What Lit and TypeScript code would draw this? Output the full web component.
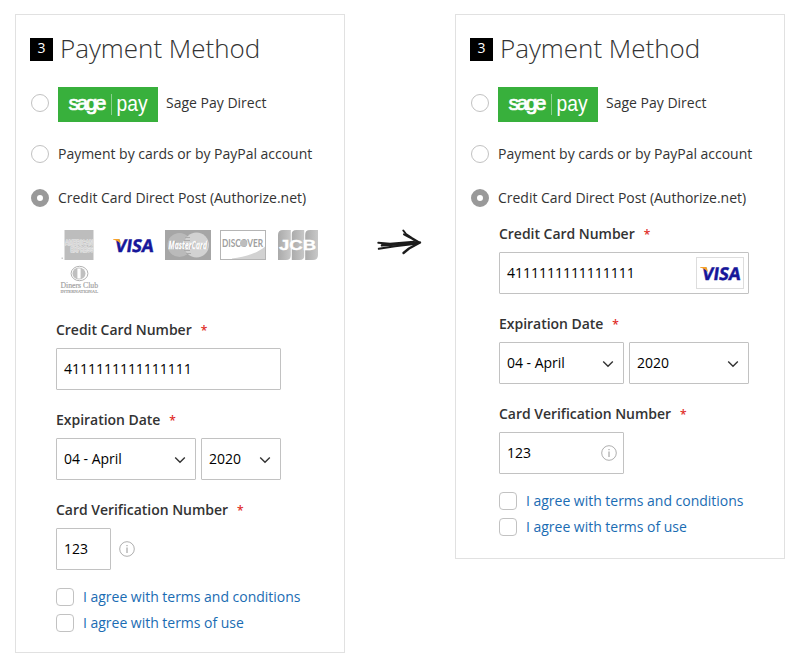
import { LitElement, html, svg, css, nothing } from "lit";
import { customElement, property } from "lit/decorators.js";

const visaMark = svg`
  <text transform="translate(4.400 21.500) skewX(-8)" fill="#16169a" class="visa" textLength="38.500" lengthAdjust="spacingAndGlyphs">VISA</text>
  <path d="M3 9h5.500q1.200 0 1.500 1.200l1 4C9 12 6.500 10.500 3 9.600z" fill="#f7a128"/>`;

@customElement("card-logo")
export class CardLogo extends LitElement {
  @property() kind = "visa";
  static styles = css`
    :host { display: block; width: 46px; height: 30px; }
    svg { display: block; width: 46px; height: 30px; overflow: visible; }
    .visa { font: 700 17.5px "Open Sans", sans-serif; letter-spacing: 0; stroke: #16169a; stroke-width: 0.5px; }
    .amex { font: 700 6.6px "Liberation Sans", sans-serif; }
    .master { font: italic 700 10.5px "Open Sans", sans-serif; }
    .discover { font: 700 10.5px "Lato", sans-serif; }
    .jcb { font: 700 14px "Liberation Sans", sans-serif; }
    .diners { font: 9px "Liberation Serif", serif; }
    .inter { font: 5px "Liberation Serif", serif; }
  `;
  private art() {
    switch (this.kind) {
      case "amex":
        return svg`
          <rect x="9.500" width="29" height="30" fill="#bdbdbd"/>
          <rect x="6.500" y="27.500" width="1.500" height="1.500" fill="#ccc"/>
          <g fill="#cfcfcf" stroke="#efefef" stroke-width=".9" paint-order="stroke"><text class="amex" x="10" y="14.500" textLength="28" lengthAdjust="spacingAndGlyphs">AMERICAN</text>
          <text class="amex" x="15.500" y="21.500" textLength="23" lengthAdjust="spacingAndGlyphs">EXPRESS</text></g>`;
      case "mastercard":
        return svg`
          <rect width="46" height="30" fill="#a6a6a6"/>
          <circle cx="14.500" cy="15" r="12" fill="#bababa"/>
          <circle cx="31.500" cy="15" r="12.500" fill="#d2d2d2"/>
          <path d="M20 7.500h5M19 10.500h6M19 20.500h6M21 23.500h5" stroke="#acacac"/>
          <text class="master" x="4.200" y="19.400" fill="#8b8b8b" textLength="38.500" lengthAdjust="spacingAndGlyphs">MasterCard</text>
          <text class="master" x="3.600" y="18.700" fill="#fff" stroke="#fff" stroke-width=".3" textLength="38.500" lengthAdjust="spacingAndGlyphs">MasterCard</text>`;
      case "discover":
        return svg`
          <rect x=".5" y=".5" width="45" height="29" fill="#fff" stroke="#b5b5b5"/>
          <path d="M45 16.500C38 23 25 27 12 28.500v.5h33z" fill="#d2d2d2"/>
          <text class="discover" x="2" y="16.800" fill="#a0a0a0" textLength="41" lengthAdjust="spacingAndGlyphs">DISCOVER</text>
          <circle cx="23.500" cy="13.200" r="3.500" fill="#bdbdbd"/>`;
      case "jcb":
        return svg`
          <defs><linearGradient id="g"><stop stop-color="#aaa"/><stop offset="1" stop-color="#c8c8c8"/></linearGradient></defs>
          ${[3, 16.5, 30].map((x) => svg`<path transform="translate(${x} 0)" d="M5 0h8v25q0 5-5 5H0V5q0-5 5-5z" fill="url(#g)"/>`)}
          <path d="M16.250 0v30M29.750 0v30" stroke="#fff" stroke-width=".8"/>
          <text class="jcb" x="4" y="19.700" fill="#fff" stroke="#fff" stroke-width=".3" textLength="37" lengthAdjust="spacingAndGlyphs">JCB</text>`;
      case "diners":
        return svg`
          <ellipse cx="24.500" cy="8.500" rx="8.400" ry="7.200" fill="#fff" stroke="#b2b2b2"/>
          <ellipse cx="24" cy="8.500" rx="6.500" ry="5.900" fill="#c0c0c0"/>
          <path d="M24 3.500v10" stroke="#fff" stroke-width="3.200"/>
          <g fill="#a2a2a2" stroke="#a2a2a2" stroke-width=".2"><text class="diners" x="5.500" y="23.200" textLength="37.500" lengthAdjust="spacingAndGlyphs">Diners Club</text>
          <text class="inter" x="5.500" y="28" textLength="37.500" lengthAdjust="spacingAndGlyphs">INTERNATIONAL</text></g>`;
      default:
        return visaMark;
    }
  }
  render() {
    return html`<svg viewBox="0 0 46 30">${this.art()}</svg>`;
  }
}

@customElement("payment-panel")
export class PaymentPanel extends LitElement {
  @property({ type: Boolean, reflect: true }) compact = false;

  static styles = css`
    :host { display: block; box-sizing: border-box; width: 330px; border: 1px solid #e1e1e1; padding: 0 14px 16px; background: #fff; letter-spacing: -0.02px; }
    :host([compact]) { padding-bottom: 18px; }
    .head { display: flex; align-items: center; height: 68px; }
    .num { width: 23px; height: 23px; background: #000; color: #fff; font: 14px/20px "Open Sans", sans-serif; text-align: center; }
    h2 { margin: 0 0 2px 7px; font-size: 26px; font-weight: 300; line-height: 36px; color: #333; white-space: nowrap; }
    .method { display: flex; align-items: center; height: 44px; white-space: nowrap; }
    .method.first { box-sizing: border-box; height: 49px; padding: 4px 0 10px; align-items: flex-start; }
    .method.first .radio, .method.first .name { margin-top: 7px; }
    .method.last { height: 36px; padding-top: 4px; }
    .radio { box-sizing: border-box; width: 18px; height: 18px; border: 1px solid #c2c2c2; border-radius: 50%; margin: 0 9px 0 1px; flex: none; }
    .radio.on { border: 6px solid #999; }
    .name { line-height: 18px; letter-spacing: 0; }
    .sage { display: block; width: 100px; height: 35px; margin-right: 8px; }
    .sagetext { font: 21px "Liberation Sans", sans-serif; letter-spacing: -2.5px; stroke: #fff; stroke-width: 0.7px; }
    .paytext { font: 22px "Liberation Sans", sans-serif; }
    .logos { display: flex; flex-wrap: wrap; gap: 5px 9px; width: 270px; margin: 14px 0 17px 25px; }
    .form { width: 225px; margin-left: 26px; }
    :host([compact]) .form { width: 250px; margin-left: 29px; }
    .field { height: 90px; }
    .label { height: 36px; line-height: 36px; font-weight: 600; letter-spacing: -0.03px; }
    .label i { color: #e02b27; font: 600 12px "Open Sans", sans-serif; margin-left: 9px; }
    .row { display: flex; gap: 5px; }
    .box { box-sizing: border-box; height: 42px; border: 1px solid #c2c2c2; border-radius: 1px; padding: 0 7px; display: flex; align-items: center; justify-content: space-between; color: #000; flex: 1; }
    .box svg { width: 12px; height: 8px; margin: 1px 2px 0 0; }
    .month { flex: 0 0 140px; }
    :host([compact]) .month { flex-basis: 125px; }
    .cvv { flex: 0 0 55px; }
    :host([compact]) .cvv { flex-basis: 125px; }
    .row .info { width: 16px; height: 16px; align-self: center; margin: 0 0 1px 2.5px; }
    .cvv .info { margin: 0 -1px 1px 0; }
    .chip { box-sizing: border-box; width: 48px; height: 32px; border: 1px solid #ddd; margin-right: -3px; }
    .agree { margin-top: 2px; }
    .agree div { display: flex; align-items: center; height: 26px; gap: 9px; color: #1a6cb3; white-space: nowrap; }
    .agree .check { flex: none; box-sizing: border-box; width: 18px; height: 18px; border: 1px solid #c2c2c2; border-radius: 4px; }
  `;

  private field(label: string, body: unknown) {
    return html`<div class="field"><div class="label">${label}<i>*</i></div><div class="row">${body}</div></div>`;
  }
  private select(value: string, cls = "") {
    return html`<div class="box ${cls}"><span>${value}</span>
      <svg viewBox="0 0 12 8"><path d="M1.200 1.500 6 6.300 10.800 1.500" fill="none" stroke="#333" stroke-width="1.400"/></svg></div>`;
  }
  private info() {
    return html`<svg class="info" viewBox="0 0 16 16"><circle cx="8" cy="8" r="7.300" fill="none" stroke="#999" stroke-width=".8"/>
      <path d="M8 6.500V12M8 4v1.200" stroke="#888" stroke-width=".9"/></svg>`;
  }
  render() {
    return html`
      <div class="head"><div class="num">3</div><h2>Payment Method</h2></div>
      <div class="method first"><span class="radio"></span>
        <svg class="sage" viewBox="0 0 100 35"><rect width="100" height="35" fill="#38b03c"/>
          <g fill="#fff"><text class="sagetext" x="10.500" y="23">sage</text>
          <text class="paytext" x="58.500" y="23.500" textLength="31" lengthAdjust="spacingAndGlyphs">pay</text></g>
          <path d="M53.500 7v21" stroke="#8bd08d"/></svg>
        <span class="name">Sage Pay Direct</span></div>
      <div class="method"><span class="radio"></span>Payment by cards or by PayPal account</div>
      <div class="method last"><span class="radio on"></span>Credit Card Direct Post (Authorize.net)</div>
      ${this.compact ? nothing : html`<div class="logos">
        ${["amex", "visa", "mastercard", "discover", "jcb", "diners"].map((k) => html`<card-logo kind=${k}></card-logo>`)}</div>`}
      <div class="form">
        ${this.field("Credit Card Number", html`<div class="box"><span>4111111111111111</span>
          ${this.compact ? html`<div class="chip"><card-logo kind="visa"></card-logo></div>` : nothing}</div>`)}
        ${this.field("Expiration Date", html`${this.select("04 - April", "month")}${this.select("2020")}`)}
        ${this.field("Card Verification Number", html`<div class="box cvv"><span>123</span>${this.compact ? this.info() : nothing}</div>
          ${this.compact ? nothing : this.info()}`)}
        <div class="agree">
          <div><span class="check"></span>I agree with terms and conditions</div>
          <div><span class="check"></span>I agree with terms of use</div>
        </div>
      </div>`;
  }
}

@customElement("app-root")
export class AppRoot extends LitElement {
  static styles = css`
    :host { display: flex; align-items: flex-start; box-sizing: border-box; width: 800px; height: 665px; padding: 14px 15px; background: #fff; font: 14px/20px "Open Sans", sans-serif; color: #333; }
    .arrow { width: 110px; height: 50px; margin-top: 206px; flex: none; }
  `;
  render() {
    return html`<payment-panel></payment-panel>
      <svg class="arrow" viewBox="345 220 110 50">
        <g fill="none" stroke="#1c1c1c" stroke-linecap="round" stroke-linejoin="round">
          <path d="M378.300 242.800 390 243.800 414 241.800" stroke-width="2"/>
          <path d="M378.800 248.800 395 246.300 416 243.800" stroke-width="2"/>
          <path d="M382 245.300 400 244.200 418 242.800" stroke-width="2.600"/>
          <path d="M403.300 230.500 406 234 412 238 419.500 242.500" stroke-width="2"/>
          <path d="M404 234.300 410 237.500 419 243" stroke-width="2"/>
          <path d="M403.500 253 409 248.500 420 242.500" stroke-width="2.400"/>
        </g>
      </svg>
      <payment-panel compact></payment-panel>`;
  }
}
